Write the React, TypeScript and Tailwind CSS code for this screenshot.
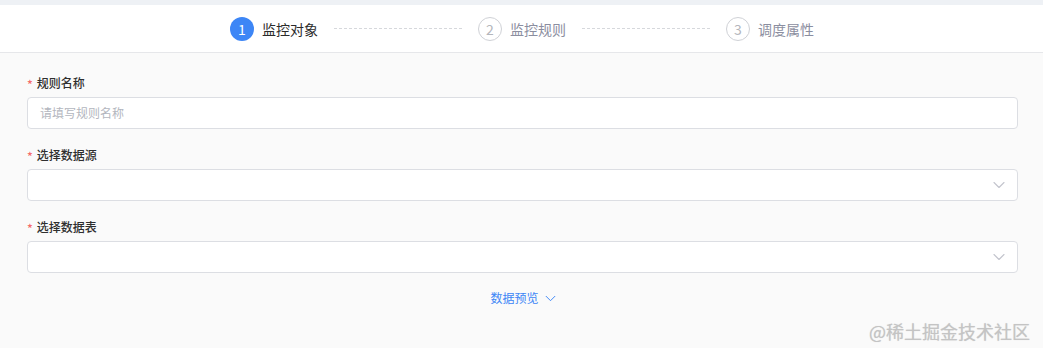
import React from "react";

const font = { fontFamily: '"Noto Sans CJK SC", "Noto Sans", sans-serif' };

function Chevron({ className }: { className?: string }) {
  return (
    <svg className={className} viewBox="0 0 12 8" fill="none">
      <path d="M1 1.5L6 6.5L11 1.5" stroke="currentColor" strokeWidth="1.1" strokeLinecap="round" strokeLinejoin="round" />
    </svg>
  );
}

function Step({ n, label, active }: { n: number; label: string; active?: boolean }) {
  return (
    <div className="flex items-center">
      {active ? (
        <div className="w-6 h-6 rounded-full bg-[#3d86f6] text-white text-[14px] flex items-center justify-center leading-none">
          {n}
        </div>
      ) : (
        <div className="w-6 h-6 rounded-full border border-[#cfd1d6] text-[#b4b6bc] text-[14px] flex items-center justify-center leading-none">
          {n}
        </div>
      )}
      <span className={`ml-2 text-[14px] leading-5 ${active ? "text-[#2b2b2b]" : "text-[#8b8ea0]"}`}>{label}</span>
    </div>
  );
}

function Line() {
  return <div className="w-[128px] mx-4 border-t border-dashed border-[#d6d8dc]" />;
}

function Field({ label, placeholder, select }: { label: string; placeholder?: string; select?: boolean }) {
  return (
    <div className="mb-[16px]">
      <div className="flex items-center h-5 mb-[4px] text-[12px] font-medium text-[#2f2f2f]">
        <span className="text-[#f56c6c] mr-[4px] text-[12px] relative top-[1px]">*</span>
        {label}
      </div>
      <div className="h-[32px] bg-white border border-[#dcdee3] rounded-[4px] flex items-center px-3 justify-between">
        <span className="text-[12px] text-[#b3b6be]">{placeholder ?? ""}</span>
        {select && <Chevron className="w-[12px] h-[8px] text-[#c3c5cd]" />}
      </div>
    </div>
  );
}

export default function App() {
  return (
    <div className="w-[1043px] h-[348px] bg-[#fafafa] relative overflow-hidden" style={font}>
      <div className="h-[5px] bg-[#eef1f5]" />
      <div className="h-[48px] bg-white border-b border-[#e6e7ea] flex items-center justify-center">
        <div className="flex items-center pl-[1px]">
          <Step n={1} label="监控对象" active />
          <Line />
          <Step n={2} label="监控规则" />
          <Line />
          <Step n={3} label="调度属性" />
        </div>
      </div>
      <div className="px-[27px] pr-[25px] pt-[20px]">
        <Field label="规则名称" placeholder="请填写规则名称" />
        <Field label="选择数据源" select />
        <Field label="选择数据表" select />
        <div className="flex items-center justify-center text-[12px] text-[#3d86f6] pl-[1px]">
          数据预览
          <Chevron className="w-[11px] h-[7px] ml-[6px] text-[#3d86f6]" />
        </div>
      </div>
      <div
        className="absolute right-[13px] bottom-[8px] text-[18px] text-[#c4c4c4] leading-none"
        style={{ textShadow: "0 0 1px rgba(0,0,0,0.15)" }}
      >
        @稀土掘金技术社区
      </div>
    </div>
  );
}
